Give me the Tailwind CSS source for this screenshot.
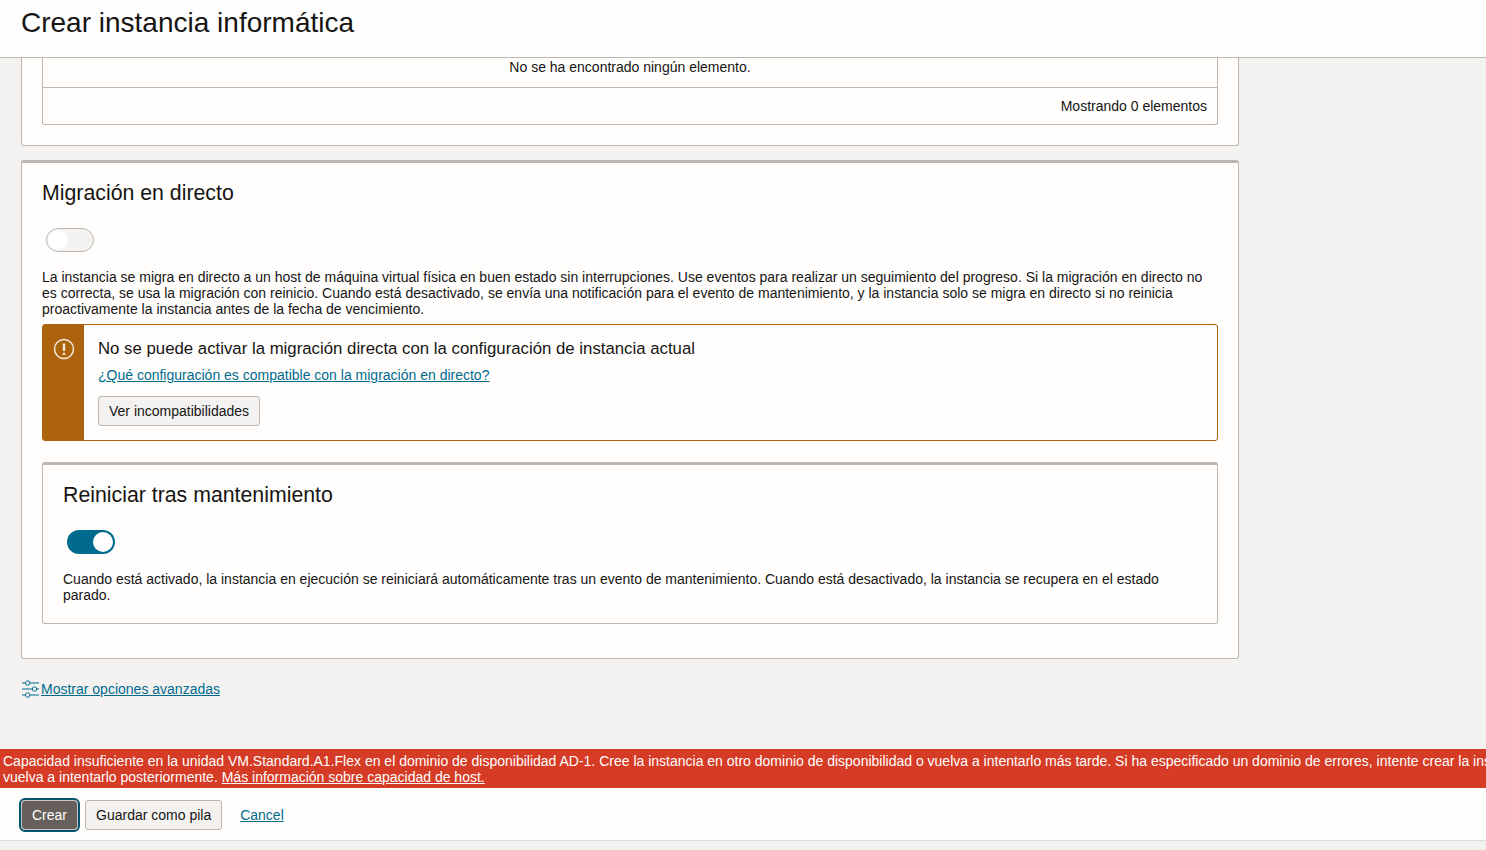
<!DOCTYPE html>
<html lang="es">
<head>
    <meta charset="UTF-8">
    <meta name="viewport" content="width=device-width, initial-scale=1.0">
    <title>Crear instancia informática</title>
    <script src="https://cdn.jsdelivr.net/npm/@tailwindcss/browser@4"></script>
</head>
<body class="bg-[#f3f2f1] h-[850px] overflow-hidden flex flex-col font-['Liberation_Sans',Arial,sans-serif] text-[14px] leading-4 text-[#161513]">

<!-- Cabecera -->
<header class="h-[58px] shrink-0 bg-[#fffefe] border-b border-[#bcb6b1] pl-[21px] pt-[6px]">
    <h1 class="text-[28px] leading-[34px] font-normal">Crear instancia informática</h1>
</header>

<!-- Contenido -->
<main class="flex-1 min-h-0 overflow-hidden pl-[21px]">
    <div class="w-[1218px]">
        <section class="h-[88px] bg-[#fffefd] border border-t-0 border-[#bcb6b1] rounded-b-[3px] px-5">
            <div class="h-[67px] bg-[#fffefd] border border-t-0 border-[#bcb6b1] rounded-b-[3px]">
                <div class="h-[30px] border-b border-[#bcb6b1] pt-[1px] text-center">No se ha encontrado ningún elemento.</div>
                <div class="pt-[10px] pr-[10px] text-right">Mostrando 0 elementos</div>
            </div>
        </section>

        <section class="mt-[14px] h-[499px] bg-[#fffefd] border border-t-[3px] border-[#bcb6b1] rounded-[3px] px-5 pt-[17px]">
            <h2 class="text-[21.3px] leading-[26px] font-normal">Migración en directo</h2>
            <div class="mt-[22px] ml-[4px] w-12 h-6 rounded-full bg-[#f3f2f1] border border-[#bcb6b1] p-[1px]">
                <div class="w-5 h-5 rounded-full bg-white"></div>
            </div>
            <p class="mt-[17px]">La instancia se migra en directo a un host de máquina virtual física en buen estado sin interrupciones. Use eventos para realizar un seguimiento del progreso. Si la migración en directo no es correcta, se usa la migración con reinicio. Cuando está desactivado, se envía una notificación para el evento de mantenimiento, y la instancia solo se migra en directo si no reinicia proactivamente la instancia antes de la fecha de vencimiento.</p>

            <!-- Aviso -->
            <div class="mt-[7px] h-[117px] flex bg-[#fffefd] border border-[#ac630c] rounded-[3px]">
                <div class="w-[41px] shrink-0 bg-[#ac630c] flex justify-center pt-[13px]">
                    <svg width="22" height="22" viewBox="0 0 22 22" fill="none" stroke="#fff" class="opacity-85">
                        <circle cx="11" cy="11" r="9.5" stroke-width="1.5"/>
                        <path d="M11 5.5v7.5" stroke-width="2.4"/>
                        <path d="M11 14.8v2.2" stroke-width="2.4"/>
                    </svg>
                </div>
                <div class="pl-[14px] pt-[15px]">
                    <div class="text-[16.8px] leading-[18px]">No se puede activar la migración directa con la configuración de instancia actual</div>
                    <a href="#" class="block mt-[9px] text-[#006b8f] underline">¿Qué configuración es compatible con la migración en directo?</a>
                    <button class="mt-[13px] h-[30px] px-[10px] bg-[#f3f2f1] border border-[#bcb6b1] rounded-[3px]">Ver incompatibilidades</button>
                </div>
            </div>

            <!-- Reiniciar -->
            <div class="mt-[21px] h-[162px] border border-t-[3px] border-[#bcb6b1] rounded-[3px] px-5 pt-[17px]">
                <h2 class="text-[21.3px] leading-[26px] font-normal">Reiniciar tras mantenimiento</h2>
                <div class="mt-[22px] ml-[4px] w-12 h-6 rounded-full bg-[#006b8f] flex justify-end items-center pr-[2px]">
                    <div class="w-5 h-5 rounded-full bg-white"></div>
                </div>
                <p class="mt-[17px]">Cuando está activado, la instancia en ejecución se reiniciará automáticamente tras un evento de mantenimiento. Cuando está desactivado, la instancia se recupera en el estado parado.</p>
            </div>
        </section>

        <div class="mt-[20px] flex items-center h-5">
            <svg width="18" height="18" viewBox="0 0 18 18" fill="none" stroke="#006b8f" stroke-width="1" class="mr-[1px] ml-[1px]">
                <path d="M0 3h3.500M8 3h9M0 9h10.300M14.700 9h2.300M0 15h3.500M8 15h9"/>
                <circle cx="5.700" cy="3" r="2.200"/>
                <circle cx="12.500" cy="9" r="2.200"/>
                <circle cx="5.700" cy="15" r="2.200"/>
            </svg>
            <a href="#" class="text-[#006b8f] underline">Mostrar opciones avanzadas</a>
        </div>
    </div>
</main>

<!-- Error -->
<div class="h-[39px] shrink-0 bg-[#d63b25] text-white pl-[3px] pt-[4px] whitespace-nowrap overflow-hidden">
    Capacidad insuficiente en la unidad VM.Standard.A1.Flex en el dominio de disponibilidad AD-1. Cree la instancia en otro dominio de disponibilidad o vuelva a intentarlo más tarde. Si ha especificado un dominio de errores, intente crear la instancia sin especificar un dominio de errores o<br>
    vuelva a intentarlo posteriormente. <a href="#" class="underline">Más información sobre capacidad de host.</a>
</div>

<!-- Pie -->
<footer class="h-[53px] shrink-0 bg-[#fffefd] border-b border-[#dfdcd9] flex items-center pl-[21px] pt-[2px]">
    <button class="h-[30px] px-[10px] bg-[#665f5b] text-white border border-[#c9c4c0] rounded-[4px] outline-2 outline-[#04536f]">Crear</button>
    <button class="ml-[7px] h-[30px] px-[10px] bg-[#f3f2f1] border border-[#bcb6b1] rounded-[3px]">Guardar como pila</button>
    <a href="#" class="ml-[18px] text-[#006b8f] underline">Cancel</a>
</footer>
<div class="h-[9px] shrink-0"></div>

</body>
</html>
